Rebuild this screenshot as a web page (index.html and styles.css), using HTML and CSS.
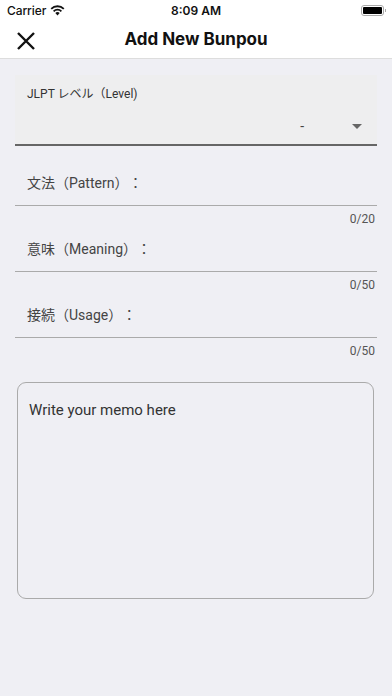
FILE: index.html
```html
<!doctype html>
<html>
 <head>
  <title>Add New Bunpou</title>
  <link rel="stylesheet" href="styles.css">
 </head>
 <body>
  <div class="status-bar">
   <span class="carrier">Carrier
    <svg class="wifi" width="15" height="11" viewBox="0 0 15 11"><path d="M7.5 10.5 L5.3 8.1 A3.2 3.2 0 0 1 9.7 8.1 Z" fill="#111"/><path d="M3.6 6.3 A5.6 5.6 0 0 1 11.4 6.3" stroke="#111" stroke-width="1.8" fill="none"/><path d="M1.2 3.8 A9 9 0 0 1 13.8 3.8" stroke="#111" stroke-width="1.8" fill="none"/></svg>
   </span>
   <span class="time">8:09 AM</span>
   <span class="battery"><span class="battery-fill"></span></span>
  </div>
  <div class="app-bar">
   <svg class="close" width="20" height="20" viewBox="0 0 20 20"><path d="M2 2 L18 18 M18 2 L2 18" stroke="#111" stroke-width="2.4"/></svg>
   <h1>Add New Bunpou</h1>
  </div>
  <div class="form">
   <div class="dropdown">
    <div class="dropdown-label">JLPT レベル（Level)</div>
    <div class="dropdown-value">
     <span>-</span>
     <span class="arrow"></span>
    </div>
   </div>
   <div class="field"><span class="field-label">文法（Pattern）：</span></div>
   <div class="counter">0/20</div>
   <div class="field"><span class="field-label">意味（Meaning）：</span></div>
   <div class="counter">0/50</div>
   <div class="field"><span class="field-label">接続（Usage）：</span></div>
   <div class="counter">0/50</div>
   <div class="memo">Write your memo here</div>
  </div>
 </body>
</html>
```

FILE: styles.css
```css
body {
  margin: 0;
  background-color: #efeff4;
  font-family: Roboto, "Noto Sans CJK JP", sans-serif;
  text-spacing-trim: space-all;
  height: 696px;
  overflow: hidden;
}

.status-bar {
  height: 20px;
  background-color: #fff;
  display: flex;
  align-items: center;
  justify-content: space-between;
  padding: 0 7px;
  font-family: Inter, sans-serif;
  font-size: 12px;
  color: #111;
  position: relative;
}

.carrier {
  display: flex;
  align-items: center;
  gap: 4px;
  font-weight: 500;
  letter-spacing: -0.1px;
}

.time {
  position: absolute;
  left: 0;
  right: 0;
  text-align: center;
  font-weight: 600;
}

.battery {
  width: 19px;
  height: 7px;
  border: 1px solid #aaa;
  border-radius: 3px;
  padding: 1px;
  margin-right: 1px;
  position: relative;
}

.battery::after {
  content: "";
  position: absolute;
  right: -3px;
  top: 3px;
  width: 1.5px;
  height: 3px;
  background-color: #aaa;
}

.battery-fill {
  display: block;
  width: 100%;
  height: 100%;
  background-color: #000;
  border-radius: 1px;
}

.app-bar {
  height: 38px;
  background-color: #fff;
  border-bottom: 1px solid #ddd;
  position: relative;
  display: flex;
  align-items: center;
  justify-content: center;
}

.app-bar h1 {
  margin: 0;
  font-family: Inter, sans-serif;
  font-size: 17px;
  font-weight: 700;
  color: #111;
  letter-spacing: 0;
}

.close {
  position: absolute;
  left: 16px;
  top: 11px;
}

.form {
  padding: 16px 15px 0 15px;
}

.dropdown {
  height: 69px;
  background-color: #eeeeef;
  border-bottom: 2px solid #666;
  box-sizing: content-box;
  padding: 0 12px;
}

.dropdown-label {
  padding-top: 11px;
  font-size: 12px;
  line-height: 16px;
  color: #333;
}

.dropdown-value {
  display: flex;
  justify-content: flex-end;
  align-items: center;
  margin-top: 16px;
  height: 16px;
  font-size: 14px;
  color: #444;
}

.arrow {
  width: 0;
  height: 0;
  border-left: 5px solid transparent;
  border-right: 5px solid transparent;
  border-top: 5px solid #666;
  margin-left: 48px;
  margin-right: 3px;
}

.field {
  padding: 15px 12px 14px 12px;
  border-bottom: 1px solid #aaa;
  font-size: 14px;
  line-height: 16px;
  color: #444;
}

.dropdown + .field {
  margin-top: 14px;
}

.counter {
  padding-top: 6px;
  height: 14px;
  line-height: 14px;
  font-size: 12px;
  color: #555;
  text-align: right;
  padding-right: 2px;
}

.memo {
  margin: 24px 3px 0 2px;
  height: 191px;
  border: 1px solid #aaa;
  border-radius: 9px;
  padding: 18px 11px 6px 11px;
  font-size: 15px;
  line-height: 18px;
  color: #333;
}
```
